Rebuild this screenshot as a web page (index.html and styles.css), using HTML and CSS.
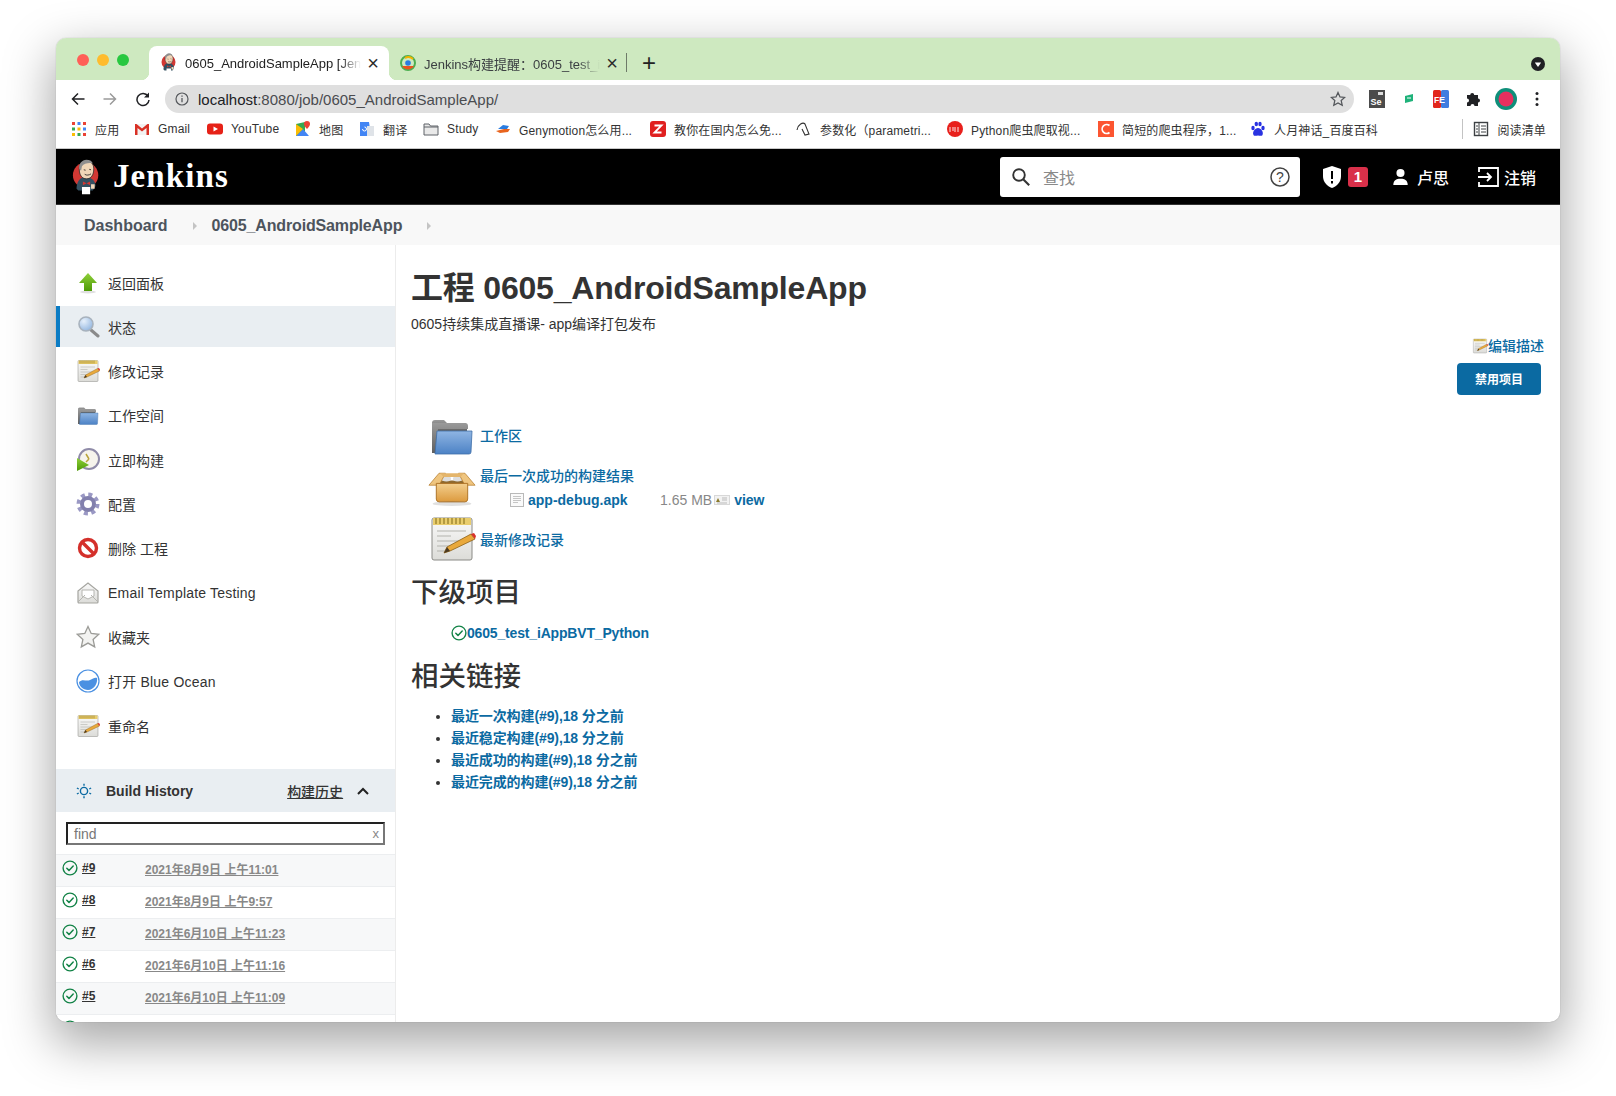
FILE: index.html
```html
<!DOCTYPE html>
<html lang="zh-CN">
<head>
<meta charset="utf-8">
<title>0605_AndroidSampleApp [Jenkins]</title>
<link rel="stylesheet" href="styles.css">
</head>
<body>
<svg class="defs" width="0" height="0" aria-hidden="true">
  <defs>
    <linearGradient id="gBlue" x1="0" y1="0" x2="0" y2="1"><stop offset="0" stop-color="#8fb5e3"/><stop offset="1" stop-color="#4c82c5"/></linearGradient>
    <linearGradient id="gGray" x1="0" y1="0" x2="0" y2="1"><stop offset="0" stop-color="#9a9a9a"/><stop offset="1" stop-color="#5f5f5f"/></linearGradient>
    <linearGradient id="gGreen" x1="0" y1="0" x2="0" y2="1"><stop offset="0" stop-color="#8fd03a"/><stop offset="1" stop-color="#4e9a06"/></linearGradient>
    <linearGradient id="gBox" x1="0" y1="0" x2="0" y2="1"><stop offset="0" stop-color="#f3cf8e"/><stop offset="1" stop-color="#dc9a3e"/></linearGradient>
    <linearGradient id="gPaper" x1="0" y1="0" x2="0" y2="1"><stop offset="0" stop-color="#fafafa"/><stop offset="1" stop-color="#dcdcd8"/></linearGradient>
    <radialGradient id="gLens" cx=".35" cy=".3" r=".8"><stop offset="0" stop-color="#e6f0fb"/><stop offset="1" stop-color="#8db2de"/></radialGradient>

    <symbol id="i-jenkins" viewBox="0 0 32 40">
      <circle cx="15" cy="18" r="14" fill="#d33833"/>
      <path d="M5 33c0-8 4-13 10-13s11 4 11 10l-3 5H7z" fill="#335061"/>
      <path d="M8 11C8 5 12 2 16 2s8 3 8 9c0 7-3 11-8 11s-8-4-8-11z" fill="#f0d6b7" stroke="#231f20" stroke-width=".8"/>
      <path d="M8 11C7 6 11 1 16 1c3 0 6 1 7 4-4-1-10 0-12 3l-1 5z" fill="#8f8f8f"/>
      <path d="M13 12l2 .5M19 11.500l2 .5M14 17c2 1.500 5 1 7-.5" stroke="#231f20" stroke-width=".9" fill="none"/>
      <path d="M12 25l4 2 4-2v4l-4-2-4 2z" fill="#d33833"/>
      <path d="M11 31h9v8h-9z" fill="#fff"/>
      <path d="M21 28h4v5h-4z" fill="#f0d6b7"/>
    </symbol>

    <symbol id="i-notepad" viewBox="0 0 48 48">
      <rect x="4" y="3" width="40" height="42" rx="2" fill="url(#gPaper)" stroke="#8a8a86"/>
      <rect x="5" y="3" width="38" height="7" fill="#e9cd6d"/>
      <path d="M8 3v6M12 3v6M16 3v6M20 3v6M24 3v6M28 3v6M32 3v6M36 3v6" stroke="#a38a33" stroke-width="1.500"/>
      <path d="M9 16h29M9 21h14M9 26h26M9 31h16M9 36h12" stroke="#b3b3ae" stroke-width="1.200"/>
      <path d="M16 38l3-6 24-13 4 5-25 12z" fill="#e9a93c" stroke="#8c5f16" stroke-width=".8"/>
      <path d="M43 19l4 5 1-3-2-3z" fill="#d9322b"/>
      <path d="M16 38l3-6 3 4z" fill="#4a3a22"/>
    </symbol>

    <symbol id="i-folder" viewBox="0 0 48 48">
      <path d="M4 12a3 3 0 0 1 3-3h9l3 3h17a3 3 0 0 1 3 3v6H4z" fill="url(#gGray)"/>
      <path d="M4 12v30h6V18h30v-3a3 3 0 0 0-3-3z" fill="url(#gGray)"/>
      <path d="M9 20h35l-1 21a2 2 0 0 1-2 2H7z" fill="url(#gBlue)" stroke="#3f6fa8" stroke-width=".8"/>
    </symbol>

    <symbol id="i-box" viewBox="0 0 52 40">
      <path d="M9 12h34l-2 5H11z" fill="#8f6a30"/>
      <ellipse cx="20" cy="10" rx="5" ry="3" fill="#dedede"/>
      <ellipse cx="32" cy="10" rx="5" ry="3" fill="#dedede"/>
      <path d="M1 17L12 4h7l-7 13zM51 17L40 4h-7l7 13z" fill="#efc57f" stroke="#b67d2d" stroke-width=".8"/>
      <path d="M13 4h26l-4 4H17z" fill="#e4b56b"/>
      <path d="M9 15h34v17a3 3 0 0 1-3 3H12a3 3 0 0 1-3-3z" fill="url(#gBox)" stroke="#a96e20"/>
      <ellipse cx="26" cy="37" rx="21" ry="2.500" fill="#000" opacity=".12"/>
    </symbol>

    <symbol id="i-check" viewBox="0 0 16 16">
      <circle cx="8" cy="8" r="6.900" fill="none" stroke="#138347" stroke-width="1.400"/>
      <path d="M4.800 8.200l2.200 2.200 4.200-4.400" fill="none" stroke="#138347" stroke-width="1.500" stroke-linecap="round" stroke-linejoin="round"/>
    </symbol>
  </defs>
</svg>

<div class="window">
  <div class="tabstrip">
    <div class="lights"><i class="light red"></i><i class="light amber"></i><i class="light green"></i></div>
    <div class="tab active">
      <svg class="favicon"><use href="#i-jenkins"/></svg>
      <span class="tab-title">0605_AndroidSampleApp [Jenkins]</span>
      <span class="tab-x">×</span>
    </div>
    <div class="tab second">
      <svg class="favicon" viewBox="0 0 16 16"><circle cx="8" cy="8" r="7" fill="none" stroke="#4caf50" stroke-width="2"/><path d="M2 11a7 7 0 0 0 12 0z" fill="#e8541e"/><path d="M5 3a7 7 0 0 1 8 1" fill="none" stroke="#f4b400" stroke-width="2"/><circle cx="8" cy="8" r="2.800" fill="#2a7de1"/></svg>
      <span class="tab-title">Jenkins构建提醒：0605_test_iAppBVT</span>
      <span class="tab-x">×</span>
    </div>
    <span class="tab-plus">+</span>
    <span class="tab-menu"><svg width="14" height="14" viewBox="0 0 14 14"><circle cx="7" cy="7" r="7" fill="#202124"/><path d="M3.800 5.500h6.400L7 10z" fill="#fff"/></svg></span>
  </div>

  <div class="toolbar">
    <svg class="nav-icon" viewBox="0 0 16 16"><path d="M14.500 8H2.500M8 2.500L2.500 8 8 13.500" fill="none" stroke="#202124" stroke-width="1.500"/></svg>
    <svg class="nav-icon fwd" viewBox="0 0 16 16"><path d="M1.500 8h12M8 2.500L13.500 8 8 13.500" fill="none" stroke="#9a9a9a" stroke-width="1.500"/></svg>
    <svg class="nav-icon reload" viewBox="0 0 16 16"><path d="M13 5.200A6 6 0 1 0 14 9" fill="none" stroke="#202124" stroke-width="1.500"/><path d="M14 1.500V6.500H9z" fill="#202124"/></svg>
    <div class="urlbar">
      <svg class="url-info" viewBox="0 0 14 14"><circle cx="7" cy="7" r="6" fill="none" stroke="#55585c" stroke-width="1.200"/><path d="M7 6v4.200M7 3.500v1.300" stroke="#55585c" stroke-width="1.300"/></svg>
      <span class="url-text"><b>localhost</b>:8080/job/0605_AndroidSampleApp/</span>
      <svg class="url-star" viewBox="0 0 16 16"><path d="M8 1.500l2 4.400 4.700.5-3.500 3.200 1 4.700L8 11.900l-4.200 2.400 1-4.700L1.300 6.400 6 5.900z" fill="none" stroke="#55585c" stroke-width="1.300"/></svg>
    </div>
    <div class="extensions">
      <svg class="ext" viewBox="0 0 16 18"><rect width="16" height="18" fill="#4b4b4b"/><rect x="9" y="2" width="5" height="3" fill="#ddd"/><text x="1.500" y="15" class="ext-se">Se</text></svg>
      <svg class="ext" viewBox="0 0 16 18"><path d="M4 6l8-2v7l-8 2z" fill="#1fb27a"/><path d="M6 8h4" stroke="#fff"/></svg>
      <svg class="ext" viewBox="0 0 16 18"><rect width="8" height="18" rx="1.500" fill="#e2261c"/><rect x="8" width="8" height="18" rx="1.500" fill="#3f7de0"/><text x="1" y="13" class="ext-fe">FE</text></svg>
      <svg class="ext" viewBox="0 0 16 16"><path d="M2 4h3.200a2 2 0 1 1 4 0H13v3.500a2 2 0 1 1 0 4V15H9.500a2 2 0 1 0-4 0H2v-3.500a2 2 0 1 0 0-4z" fill="#202124"/></svg>
      <svg class="ext ext-avatar" viewBox="0 0 22 22"><circle cx="11" cy="11" r="11" fill="#0f8f7a"/><circle cx="11" cy="11" r="7.500" fill="#e6305f"/></svg>
      <svg class="ext ext-dots" viewBox="0 0 4 16"><circle cx="2" cy="2.500" r="1.500" fill="#202124"/><circle cx="2" cy="8" r="1.500" fill="#202124"/><circle cx="2" cy="13.500" r="1.500" fill="#202124"/></svg>
    </div>
  </div>

  <div class="bookmarks">
    <div class="bm-grid">
      <span class="bm"><svg class="bm-ico" viewBox="0 0 16 16"><g><rect x="1" y="1" width="3" height="3" fill="#ea4335"/><rect x="6.500" y="1" width="3" height="3" fill="#4285f4"/><rect x="12" y="1" width="3" height="3" fill="#ea4335"/><rect x="1" y="6.500" width="3" height="3" fill="#34a853"/><rect x="6.500" y="6.500" width="3" height="3" fill="#fbbc05"/><rect x="12" y="6.500" width="3" height="3" fill="#4285f4"/><rect x="1" y="12" width="3" height="3" fill="#fbbc05"/><rect x="6.500" y="12" width="3" height="3" fill="#34a853"/><rect x="12" y="12" width="3" height="3" fill="#ea4335"/></g></svg>应用</span>
      <span class="bm"><svg class="bm-ico" viewBox="0 0 16 16"><path d="M1 3h14v11H1z" fill="#f2f2f2"/><path d="M1 3v11h2.500V7L8 10.500 12.500 7v7H15V3h-1.500L8 7.500 2.500 3z" fill="#d93025"/></svg>Gmail</span>
      <span class="bm"><svg class="bm-ico" viewBox="0 0 16 16"><rect y="2.500" width="16" height="11" rx="3" fill="#e62117"/><path d="M6.500 5.500v5L11 8z" fill="#fff"/></svg>YouTube</span>
      <span class="bm"><svg class="bm-ico" viewBox="0 0 16 16"><path d="M1 3l9-2v14H1z" fill="#34a853"/><path d="M1 15l7-7 6 7z" fill="#4285f4"/><path d="M1 3l7 5-7 7z" fill="#fbbc05"/><path d="M12 0a3 3 0 0 1 3 3c0 2-3 5-3 5S9 5 9 3a3 3 0 0 1 3-3z" fill="#ea4335"/></svg>地图</span>
      <span class="bm"><svg class="bm-ico" viewBox="0 0 16 16"><path d="M1 1h9l2 14H1z" fill="#4285f4"/><path d="M8 5h7v10H8z" fill="#dfe3e8"/><path d="M3.500 8a2 2 0 1 0 2-2" fill="none" stroke="#fff"/></svg>翻译</span>
      <span class="bm"><svg class="bm-ico" viewBox="0 0 16 16"><path d="M1 3h5l1.500 2H15v9H1z" fill="#e9e9e9" stroke="#5f6368"/><path d="M1 6h14" stroke="#5f6368"/></svg>Study</span>
      <span class="bm"><svg class="bm-ico" viewBox="0 0 16 16"><path d="M1 10l8-2 6 0-2 3-8 1z" fill="#e8641e"/><path d="M3 8l5-4 6 1-2 3z" fill="#2a7de1"/></svg>Genymotion怎么用...</span>
      <span class="bm"><svg class="bm-ico" viewBox="0 0 16 16"><rect width="16" height="16" rx="3" fill="#e02020"/><path d="M4.500 4.500h7L4.500 11.500h7" fill="none" stroke="#fff" stroke-width="1.800"/></svg>教你在国内怎么免...</span>
      <span class="bm"><svg class="bm-ico" viewBox="0 0 16 16"><path d="M1 9C2 3 7 1 9 3l4 10-4 1-3-6" fill="none" stroke="#333" stroke-width="1.100"/></svg>参数化（parametri...</span>
      <span class="bm"><svg class="bm-ico" viewBox="0 0 16 16"><circle cx="8" cy="8" r="8" fill="#e8201c"/><path d="M3 6v5M6 6v4M8 6v5M11 6v5" stroke="#fff" stroke-width=".9"/></svg>Python爬虫爬取视...</span>
      <span class="bm"><svg class="bm-ico" viewBox="0 0 16 16"><rect width="16" height="16" fill="#fc5531"/><path d="M11.500 4.500A4.500 4.500 0 1 0 11.500 11.500" fill="none" stroke="#fff" stroke-width="1.700"/></svg>简短的爬虫程序，1...</span>
      <span class="bm"><svg class="bm-ico" viewBox="0 0 16 16"><g fill="#2932e1"><ellipse cx="3" cy="7" rx="1.700" ry="2.200"/><ellipse cx="6.300" cy="3" rx="1.700" ry="2.300"/><ellipse cx="10" cy="3" rx="1.700" ry="2.300"/><ellipse cx="13" cy="7" rx="1.700" ry="2.200"/><path d="M8 7c3 0 6 4 4.500 7-1 1.500-3 .6-4.500.6s-3.500.9-4.500-.6C2 11 5 7 8 7z"/></g></svg>人月神话_百度百科</span>
    </div>
    <span class="bm bm-read"><svg class="bm-ico" viewBox="0 0 16 16"><rect x="1.500" y="1.500" width="13" height="13" fill="none" stroke="#3c4043" stroke-width="1.400"/><path d="M6 1.500v13M3 5h2M3 8h2M3 11h2M8 5h5M8 8h5M8 11h5" stroke="#3c4043"/></svg>阅读清单</span>
  </div>

  <header class="jk-header">
    <svg class="jk-logo"><use href="#i-jenkins"/></svg>
    <span class="jk-name">Jenkins</span>
    <div class="jk-search">
      <svg class="jk-search-ico" viewBox="0 0 20 20"><circle cx="8" cy="8" r="5.800" fill="none" stroke="#333" stroke-width="1.900"/><path d="M12.200 12.200l6 6" stroke="#333" stroke-width="2.100"/></svg>
      <span class="jk-placeholder">查找</span>
      <svg class="jk-help" viewBox="0 0 20 20"><circle cx="10" cy="10" r="9" fill="none" stroke="#444" stroke-width="1.500"/><text x="10" y="15" class="jk-help-q">?</text></svg>
    </div>
    <svg class="jk-shield" viewBox="0 0 18 22"><path d="M9 0l9 3v7c0 6-4 10-9 12-5-2-9-6-9-12V3z" fill="#fff"/><path d="M9 5v8M9 15v2.500" stroke="#000" stroke-width="2"/></svg>
    <span class="jk-badge">1</span>
    <svg class="jk-person" viewBox="0 0 18 20"><circle cx="9" cy="5.500" r="4.500" fill="#fff"/><path d="M1 19c0-5 3-7 8-7s8 2 8 7z" fill="#fff"/></svg>
    <span class="jk-link">卢思</span>
    <svg class="jk-logout" viewBox="0 0 22 20"><path d="M2 5V1h19v18H2v-4" fill="none" stroke="#fff" stroke-width="1.800"/><path d="M1 10h13M10 6l4 4-4 4" fill="none" stroke="#fff" stroke-width="1.800"/></svg>
    <span class="jk-link">注销</span>
  </header>

  <nav class="crumbs">
    <span class="crumb">Dashboard</span><i class="crumb-arrow"></i>
    <span class="crumb crumb-job">0605_AndroidSampleApp</span><i class="crumb-arrow"></i>
  </nav>

  <div class="body-row">
    <aside class="side">
      <ul class="tasks">
        <li class="task"><svg class="task-ico" viewBox="0 0 24 24"><ellipse cx="12" cy="21" rx="8" ry="1.500" fill="#000" opacity=".12"/><path d="M12 2l9 10h-5v8H8v-8H3z" fill="url(#gGreen)"/></svg>返回面板</li>
        <li class="task current"><svg class="task-ico" viewBox="0 0 24 24"><path d="M15 15l7 6" stroke="#8a8a8a" stroke-width="3" stroke-linecap="round"/><circle cx="10" cy="9" r="7" fill="url(#gLens)" stroke="#a8b2bd" stroke-width="1.600"/></svg>状态</li>
        <li class="task"><svg class="task-ico"><use href="#i-notepad"/></svg>修改记录</li>
        <li class="task"><svg class="task-ico"><use href="#i-folder"/></svg>工作空间</li>
        <li class="task"><svg class="task-ico" viewBox="0 0 24 24"><circle cx="13" cy="11" r="10" fill="#f6f4ec" stroke="#8f8ba8" stroke-width="2"/><path d="M13 11l-3-5M13 11l-3 3" stroke="#b9a33a" stroke-width="1.500"/><path d="M1 10l12 7-12 6z" fill="url(#gGreen)"/></svg>立即构建</li>
        <li class="task"><svg class="task-ico" viewBox="0 0 24 24"><circle cx="12" cy="12" r="9.500" fill="none" stroke="#9a98c4" stroke-width="4" stroke-dasharray="4 3.460"/><circle cx="12" cy="12" r="6" fill="none" stroke="#8280ad" stroke-width="4"/></svg>配置</li>
        <li class="task"><svg class="task-ico" viewBox="0 0 24 24"><circle cx="12" cy="12" r="8.500" fill="#fff" stroke="#d4302b" stroke-width="3.400"/><path d="M6 6l12 12" stroke="#d4302b" stroke-width="3.400"/></svg>删除 工程</li>
        <li class="task task-latin"><svg class="task-ico" viewBox="0 0 24 24"><path d="M2 10l10-8 10 8v11a1 1 0 0 1-1 1H3a1 1 0 0 1-1-1z" fill="url(#gPaper)" stroke="#a5a5a0" stroke-width="1.200"/><path d="M6 9h12v6l-6 3-6-3z" fill="#fff" stroke="#b5b5b0"/><path d="M2 21l7-7M22 21l-7-7" stroke="#b5b5b0"/></svg>Email Template Testing</li>
        <li class="task"><svg class="task-ico" viewBox="0 0 24 24"><path d="M12 1.500l3.200 7 7.600.8-5.700 5.100 1.600 7.500L12 18.100l-6.700 3.800 1.600-7.500L1.200 9.300l7.600-.8z" fill="#f3f3f1" stroke="#9b9b97" stroke-width="1.300"/></svg>收藏夹</li>
        <li class="task task-latin"><svg class="task-ico" viewBox="0 0 24 24"><circle cx="12" cy="12" r="11" fill="#fff" stroke="#4a90e2" stroke-width="1.200"/><path d="M3 13c4-4 7 0 11-2 3-1.500 5-3 7-2 1 5-3 12-9 12-5 0-9-4-9-8z" fill="#4a90e2"/></svg>打开 Blue Ocean</li>
        <li class="task"><svg class="task-ico"><use href="#i-notepad"/></svg>重命名</li>
      </ul>

      <section class="history">
        <div class="hist-head">
          <svg class="hist-sun" viewBox="0 0 16 16"><circle cx="8" cy="8" r="3.600" fill="none" stroke="#0b6aa2" stroke-width="1.400"/><path d="M8 .8v2M8 13.200v2M.9 5l1.800 1M13.300 10l1.800 1M.9 11l1.800-1M13.300 6l1.800-1" stroke="#0b6aa2" stroke-width="1.400"/></svg>
          <span class="hist-title">Build History</span>
          <span class="hist-link">构建历史</span>
          <svg class="hist-chev" viewBox="0 0 14 10"><path d="M2 8l5-5 5 5" fill="none" stroke="#222" stroke-width="2"/></svg>
        </div>
        <div class="hist-find"><span class="find-word">find</span><span class="find-x">x</span></div>
        <div class="hist-row odd"><svg class="row-ico"><use href="#i-check"/></svg><span class="row-num">#9</span><span class="row-date">2021年8月9日 上午11:01</span></div>
        <div class="hist-row"><svg class="row-ico"><use href="#i-check"/></svg><span class="row-num">#8</span><span class="row-date">2021年8月9日 上午9:57</span></div>
        <div class="hist-row odd"><svg class="row-ico"><use href="#i-check"/></svg><span class="row-num">#7</span><span class="row-date">2021年6月10日 上午11:23</span></div>
        <div class="hist-row"><svg class="row-ico"><use href="#i-check"/></svg><span class="row-num">#6</span><span class="row-date">2021年6月10日 上午11:16</span></div>
        <div class="hist-row odd"><svg class="row-ico"><use href="#i-check"/></svg><span class="row-num">#5</span><span class="row-date">2021年6月10日 上午11:09</span></div>
        <div class="hist-row"><svg class="row-ico"><use href="#i-check"/></svg></div>
      </section>
    </aside>

    <main class="main">
      <h1 class="title">工程 0605_AndroidSampleApp</h1>
      <p class="desc">0605持续集成直播课- app编译打包发布</p>
      <div class="actions">
        <a class="edit-desc"><svg class="edit-ico"><use href="#i-notepad"/></svg>编辑描述</a>
        <button class="disable-btn">禁用项目</button>
      </div>
      <div class="links">
        <div class="link-row"><svg class="big-ico"><use href="#i-folder"/></svg><a class="lnk">工作区</a></div>
        <div class="link-row two">
          <svg class="big-ico"><use href="#i-box"/></svg>
          <div class="artifact">
            <a class="lnk">最后一次成功的构建结果</a>
            <div class="artifact-file">
              <svg class="doc-ico" viewBox="0 0 14 14"><rect x=".5" y=".5" width="13" height="13" fill="#fafafa" stroke="#b9b9b9"/><path d="M3 3.500h8M3 5.500h8M3 7.500h8M3 9.500h5" stroke="#c5c5c5"/></svg>
              <a class="lnk strong file-name">app-debug.apk</a>
              <span class="size">1.65 MB</span>
              <svg class="view-ico" viewBox="0 0 16 12"><rect x=".5" y="1.500" width="15" height="9" fill="#f2f2f2" stroke="#d8d8d8"/><path d="M2 8l2-4 2 4z" fill="#8a7a2a"/><path d="M8 4h5M8 6h5M3 9h10" stroke="#bbb"/></svg>
              <a class="lnk strong">view</a>
            </div>
          </div>
        </div>
        <div class="link-row"><svg class="big-ico"><use href="#i-notepad"/></svg><a class="lnk">最新修改记录</a></div>
      </div>
      <h2 class="sub">下级项目</h2>
      <div class="child"><svg class="child-ico"><use href="#i-check"/></svg><a class="lnk strong child-name">0605_test_iAppBVT_Python</a></div>
      <h2 class="sub related">相关链接</h2>
      <ul class="perma">
        <li><a class="lnk med">最近一次构建(#9),18 分之前</a></li>
        <li><a class="lnk med">最近稳定构建(#9),18 分之前</a></li>
        <li><a class="lnk med">最近成功的构建(#9),18 分之前</a></li>
        <li><a class="lnk med">最近完成的构建(#9),18 分之前</a></li>
      </ul>
    </main>
  </div>
</div>
</body>
</html>
```

FILE: styles.css
```css
* { box-sizing: border-box; }
html, body { margin: 0; height: 1096px; overflow: hidden; background: #fff; }
body {
  padding: 38px 56px 0;
  font-family: "Liberation Sans", "Noto Sans CJK SC", sans-serif;
  font-size: 14px;
  color: #333;
}
.defs { position: absolute; }
ul { list-style: none; margin: 0; padding: 0; }

.window {
  width: 1504px;
  height: 984px;
  border-radius: 10px;
  overflow: hidden;
  background: #fff;
  box-shadow: 0 0 1px rgba(0,0,0,.35), 0 18px 48px 4px rgba(0,0,0,.34);
  display: flex;
  flex-direction: column;
}

/* tab strip */
.tabstrip {
  height: 42px;
  flex: none;
  background: #cee9c0;
  display: flex;
  align-items: flex-end;
}
.lights { width: 93px; height: 42px; padding: 16px 0 0 21px; display: flex; gap: 8px; flex: none; }
.light { width: 12px; height: 12px; border-radius: 50%; display: block; }
.light.red { background: #ff5f57; }
.light.amber { background: #febc2e; }
.light.green { background: #28c840; }
.tab {
  height: 34px;
  display: flex;
  align-items: center;
  position: relative;
  font-size: 13px;
  color: #3c4043;
  flex: none;
}
.tab.active { width: 240px; background: #fff; border-radius: 8px 8px 0 0; padding: 0 8px 0 12px; color: #222; }
.tab.active::before, .tab.active::after {
  content: "";
  position: absolute;
  bottom: 0;
  width: 8px;
  height: 8px;
}
.tab.active::before { left: -8px; background: radial-gradient(circle at 0 0, #cee9c0 8px, #fff 8.5px); }
.tab.active::after { right: -8px; background: radial-gradient(circle at 100% 0, #cee9c0 8px, #fff 8.5px); }
.tab.second { width: 238px; padding: 0 7px 0 11px; }
.tab.second::after {
  content: "";
  position: absolute;
  right: 0;
  top: 7px;
  height: 19px;
  width: 1px;
  background: #6e7a68;
}
.favicon { width: 16px; height: 20px; flex: none; margin-right: 8px; }
.tab-title {
  flex: 1;
  min-width: 0;
  white-space: nowrap;
  overflow: hidden;
  -webkit-mask-image: linear-gradient(to right, #000 88%, transparent 100%);
  mask-image: linear-gradient(to right, #000 88%, transparent 100%);
}
.tab-x { width: 16px; margin-left: 4px; text-align: center; font-size: 20px; line-height: 20px; color: #2b2b2b; flex: none; }
.tab-plus { margin-left: 15px; font-size: 24px; line-height: 34px; height: 34px; color: #222; flex: none; }
.tab-menu { margin-left: auto; margin-right: 15px; height: 32px; display: flex; align-items: center; flex: none; }

/* toolbar */
.toolbar {
  height: 34px;
  flex: none;
  display: flex;
  align-items: center;
  padding: 4px 0 0 14px;
}
.nav-icon { width: 16px; height: 16px; flex: none; }
.nav-icon.fwd { margin-left: 16px; }
.nav-icon.reload { margin-left: 17px; }
.urlbar {
  width: 1189px;
  height: 28px;
  margin-left: 14px;
  border-radius: 14px;
  background: #dfdfdf;
  display: flex;
  align-items: center;
  padding: 0 8px 0 10px;
  flex: none;
}
.url-info { width: 14px; height: 14px; flex: none; }
.url-text { margin-left: 9px; font-size: 15px; color: #4a4c50; flex: 1; }
.url-text b { font-weight: 400; color: #202124; }
.url-star { width: 16px; height: 16px; flex: none; margin-right: 0; }
.extensions { display: flex; align-items: center; margin-left: 15px; }
.ext { width: 16px; height: 18px; flex: none; margin-right: 16px; }
.ext-se { font: 700 9px "Liberation Sans", sans-serif; fill: #fff; }
.ext-fe { font: 700 8.500px "Liberation Sans", sans-serif; fill: #fff; }
.ext-avatar { width: 22px; height: 22px; margin-left: -2px; margin-right: 18px; }
.ext-dots { width: 4px; height: 16px; margin-right: 0; }

/* bookmarks */
.bookmarks {
  height: 35px;
  flex: none;
  display: flex;
  align-items: center;
  padding: 0 14px 4px 15px;
  border-bottom: 1px solid #c9c9c9;
  font-size: 12px;
  letter-spacing: .15px;
  color: #333;
}
.bm-grid {
  display: grid;
  grid-template-columns: 63px 73px 88px 64px 64px 72px 155px 146px 151px 151px 152px auto;
}
.bm { display: flex; align-items: center; white-space: nowrap; }
.bm-ico { width: 16px; height: 16px; margin-right: 8px; flex: none; }
.bm-read { margin-left: auto; border-left: 1px solid #c3c3c3; padding-left: 10px; height: 20px; }

/* jenkins header */
.jk-header {
  height: 56px;
  flex: none;
  background: #000;
  display: flex;
  align-items: center;
  color: #fff;
  padding-left: 16px;
  border-bottom: 1px solid #333;
}
.jk-logo { width: 29px; height: 38px; flex: none; }
.jk-name {
  margin-left: 12px;
  font-family: "Liberation Serif", serif;
  font-weight: 700;
  font-size: 33px;
  letter-spacing: 1.100px;
  flex: none;
}
.jk-search {
  margin-left: auto;
  width: 300px;
  height: 40px;
  border-radius: 3px;
  background: #fff;
  display: flex;
  align-items: center;
  padding: 0 10px 0 11px;
  flex: none;
}
.jk-search-ico { width: 20px; height: 20px; flex: none; }
.jk-placeholder { margin-left: 12px; font-size: 16px; color: #8a8a8a; flex: 1; }
.jk-help { width: 20px; height: 20px; flex: none; }
.jk-help-q { font: 400 14px "Liberation Sans", sans-serif; text-anchor: middle; fill: #444; }
.jk-shield { width: 18px; height: 22px; margin-left: 23px; flex: none; }
.jk-badge {
  width: 20px;
  height: 20px;
  margin-left: 7px;
  border-radius: 3px;
  background: #d9304a;
  font-weight: 700;
  font-size: 15px;
  line-height: 20px;
  text-align: center;
  flex: none;
}
.jk-person { width: 17px; height: 18px; margin-left: 24px; flex: none; }
.jk-link { margin-left: 8px; font-size: 16px; font-weight: 500; flex: none; }
.jk-logout { width: 22px; height: 20px; margin-left: 28px; flex: none; }
.jk-logout + .jk-link { margin-right: 24px; margin-left: 5px; }

/* breadcrumbs */
.crumbs {
  height: 40px;
  flex: none;
  background: #f8f8f8;
  display: flex;
  align-items: center;
  padding: 2px 0 0 28px;
  font-size: 16px;
  font-weight: 700;
  color: #4d545d;
}
.crumb-arrow {
  width: 0;
  height: 0;
  border-left: 4px solid #c4c4c4;
  border-top: 4px solid transparent;
  border-bottom: 4px solid transparent;
  margin: 0 15px 0 25px;
}
.crumb { flex: none; }
.crumb-job { letter-spacing: -.15px; }

/* body */
.body-row { flex: 1; display: flex; min-height: 0; }
.side {
  width: 340px;
  flex: none;
  border-right: 1px solid #ececec;
  overflow: hidden;
  padding-top: 17px;
}
.task {
  height: 41px;
  margin-bottom: 3.330px;
  display: flex;
  align-items: center;
  padding-left: 20px;
  color: #333;
}
.task-latin { letter-spacing: .2px; }
.task.current { background: #e9eef2; border-left: 4px solid #0b7cc4; padding-left: 16px; }
.task-ico { width: 24px; height: 24px; margin-right: 8px; flex: none; }

.history { margin-top: 23px; }
.hist-head {
  height: 43px;
  background: #e9eef2;
  display: flex;
  align-items: center;
  padding-left: 20px;
  font-weight: 700;
}
.hist-sun { width: 16px; height: 16px; flex: none; }
.hist-title { margin-left: 14px; color: #333; }
.hist-link { margin-left: 94px; font-weight: 500; text-decoration: underline; }
.hist-chev { width: 14px; height: 10px; margin-left: 13px; flex: none; }
.hist-find {
  height: 23px;
  margin: 10px 10px 9px 10px;
  border: 2px solid;
  border-color: #222 #777 #777 #222;
  display: flex;
  align-items: center;
  justify-content: space-between;
  padding: 0 4px 0 6px;
  color: #777;
}
.find-x { font-size: 13px; color: #888; }
.hist-row {
  height: 32px;
  display: flex;
  align-items: center;
  border-top: 1px solid #eceef0;
  padding: 0 0 5px 6px;
}
.hist-row.odd { background: #f7f8f9; }
.row-ico { width: 16px; height: 16px; flex: none; }
.row-num { margin-left: 4px; width: 63px; font-size: 12px; font-weight: 700; color: #333; text-decoration: underline; }
.row-date { font-size: 12px; font-weight: 600; color: #888; text-decoration: underline; }

/* main */
.main { flex: 1; min-width: 0; padding: 23px 16px 0 16px; position: relative; }
.title { margin: 0 0 0 -1px; font-size: 32px; line-height: 40px; font-weight: 700; color: #333; white-space: nowrap; letter-spacing: -.2px; }
.desc { margin: 6px 0 0 -1px; line-height: 20px; color: #333; }
.actions { display: flex; flex-direction: column; align-items: flex-end; margin-top: 2px; }
.edit-desc { display: flex; align-items: center; line-height: 20px; color: #0b6aa2; font-weight: 500; }
.edit-ico { width: 16px; height: 16px; flex: none; margin-right: 0; }
.disable-btn {
  width: 84px;
  height: 32px;
  margin: 7px 3px 0 0;
  padding: 0 0 2px;
  border: 0;
  border-radius: 4px;
  background: #0b6aa2;
  color: #fff;
  font: 700 12px "Liberation Sans", "Noto Sans CJK SC", sans-serif;
}
.links { margin: 16px 0 0 16px; }
.link-row { display: flex; align-items: center; height: 48px; margin-bottom: 5px; }
.link-row.two { margin-bottom: 3px; }
.big-ico { width: 48px; height: 48px; flex: none; margin-right: 4px; }
.lnk { color: #0b6aa2; font-weight: 500; }
.strong { font-weight: 700; }
.med { font-weight: 600; letter-spacing: -.1px; }
.artifact { display: flex; flex-direction: column; gap: 5px; margin-top: -1px; }
.artifact-file { display: flex; align-items: center; padding-left: 30px; line-height: 20px; }
.doc-ico { width: 14px; height: 14px; margin-right: 4px; flex: none; }
.file-name { width: 132px; }
.size { color: #888; }
.view-ico { width: 16px; height: 12px; margin: 0 4px 0 2px; flex: none; }
.sub { margin: 12px 0 0 -1px; font-size: 27.500px; line-height: 36px; font-weight: 500; color: #333; }
.child { display: flex; align-items: center; margin: 12px 0 0 39px; line-height: 20px; }
.child-name { letter-spacing: -.17px; }
.child-ico { width: 16px; height: 16px; flex: none; }
.sub.related { margin-top: 16px; }
.perma { margin-top: 10px; padding-left: 39px; list-style: disc; }
.perma li { line-height: 22px; }
```
